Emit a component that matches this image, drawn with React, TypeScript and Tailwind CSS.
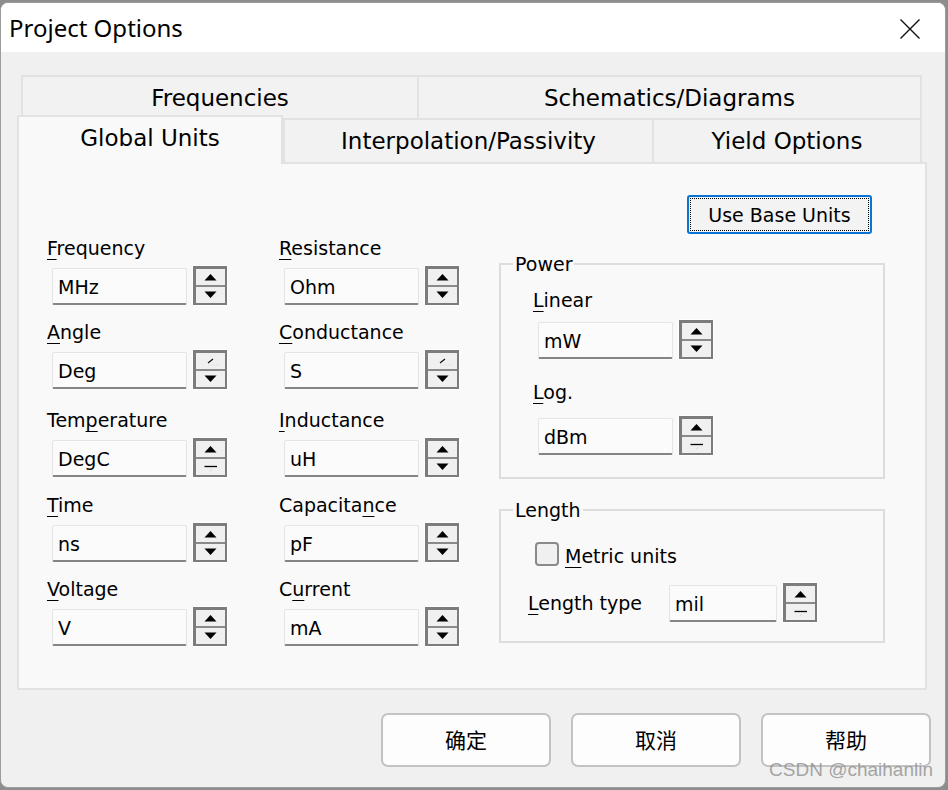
import React from "react";

type SpinKind = "normal" | "angle" | "minus";

function Spinner({ kind = "normal" }: { kind?: SpinKind }) {
	return (
		<div className="flex h-[39px] w-[34px] flex-col border-[2px] border-l-[3px] border-t-[3px] border-[#7c7c7c] bg-[#f0f0f0] outline outline-1 outline-white">
			<div className="flex-1">
				<svg width="29" height="16" viewBox="0 0 29 16">
					{kind === "angle" ? (
						<>
							<line x1="12" y1="10" x2="17" y2="6" stroke="#111" strokeWidth="1.3" />
							<line x1="12" y1="12" x2="24" y2="12" stroke="#e6e6e6" strokeWidth="1" />
						</>
					) : (
						<polygon points="8.5,11.5 20.5,11.5 14.5,5" fill="#000" />
					)}
				</svg>
			</div>
			<div className="h-[2px] bg-[#8a8a8a]" />
			<div className="flex-1">
				<svg width="29" height="16" viewBox="0 0 29 16">
					{kind === "minus" ? (
						<>
							<line x1="8.5" y1="7.5" x2="21" y2="7.5" stroke="#000" strokeWidth="1.3" />
							<line x1="14" y1="12" x2="16" y2="10" stroke="#d6d6d6" strokeWidth="1" />
						</>
					) : (
						<polygon points="8.5,4.5 20.5,4.5 14.5,11" fill="#000" />
					)}
				</svg>
			</div>
		</div>
	);
}

function Input({ value, w = "w-[135px]" }: { value: string; w?: string }) {
	return (
		<div
			className={`${w} flex h-[37px] items-center rounded-[2px] border border-b-[2px] border-[#e4e4e4] border-b-[#858585] bg-[#fbfbfb] pl-[5px] pt-[3px] text-[19px] text-black`}
		>
			{value}
		</div>
	);
}

function Label({ text, u }: { text: string; u: number }) {
	return (
		<div className="h-[22px] text-[19px] leading-[22px] whitespace-nowrap text-black">
			{text.slice(0, u)}
			<span className="underline decoration-1 underline-offset-[4px]">{text[u]}</span>
			{text.slice(u + 1)}
		</div>
	);
}

function Field({
	label,
	u,
	value,
	kind,
	className = "",
}: {
	label: string;
	u: number;
	value: string;
	kind?: SpinKind;
	className?: string;
}) {
	return (
		<div className={className}>
			<Label text={label} u={u} />
			<div className="ml-[5px] mt-[7px] flex items-end gap-[6px]">
				<Input value={value} />
				<Spinner kind={kind} />
			</div>
		</div>
	);
}

function Tab({ label, w, active = false }: { label: string; w: string; active?: boolean }) {
	return (
		<div
			className={
				active
					? `${w} relative z-10 -mb-[2px] flex h-[49px] items-start justify-center border-[2px] border-b-0 border-[#e2e2e2] bg-[#f9f9f9] pt-[4px] text-[23px]`
					: `${w} flex h-[44px] items-center justify-center border-[2px] border-r-0 border-b-0 border-[#e2e2e2] bg-[#f2f2f2] text-[23px] last:border-r-[2px]`
			}
		>
			{label}
		</div>
	);
}

function CnButton({ label }: { label: string }) {
	return (
		<button className="flex h-[54px] w-[170px] items-center justify-center rounded-[7px] border-[2px] border-[#c3c3c3] bg-[#fdfdfd] font-['Noto_Sans_CJK_SC',sans-serif] text-[21px] text-black">
			{label}
		</button>
	);
}

export default function App() {
	return (
		<div className="h-[790px] w-[948px] overflow-hidden bg-[#8d8d8d] pt-[2px] font-['DejaVu_Sans',sans-serif] text-black">
			<div className="relative flex h-[786px] w-[946px] flex-col overflow-hidden rounded-[8px] border border-[#9c9c9c] bg-[#f0f0f0]">
				{/* title bar */}
				<div className="flex h-[49px] items-center justify-between bg-white pl-[8px] pr-[24px]">
					<span className="pt-[1px] font-['Noto_Sans',sans-serif] text-[24px] text-black">Project Options</span>
					<svg width="22" height="22" viewBox="0 0 22 22" className="mt-[2px]">
						<path d="M1.5 1.5 L20.5 20.5 M20.5 1.5 L1.5 20.5" stroke="#111" strokeWidth="1.4" fill="none" />
					</svg>
				</div>

				<div className="flex flex-col pl-[16px] pt-[23px]">
					{/* tab strip */}
					<div className="ml-[4px] flex">
						<Tab label="Frequencies" w="w-[396px]" />
						<Tab label="Schematics/Diagrams" w="w-[505px]" />
					</div>
					<div className="-mt-[4px] flex h-[47px] items-end">
						<Tab label="Global Units" w="w-[266px]" active />
						<Tab label="Interpolation/Passivity" w="w-[369px]" />
						<Tab label="Yield Options" w="w-[270px]" />
					</div>

					{/* panel */}
					<div className="flex h-[528px] w-[910px] border-[2px] border-[#e2e2e2] bg-[#f9f9f9] pl-[28px]">
						<div className="mt-[73px] w-[232px]">
							<Field label="Frequency" u={0} value="MHz" />
							<Field label="Angle" u={0} value="Deg" kind="angle" className="mt-[16px]" />
							<Field label="Temperature" u={3} value="DegC" kind="minus" className="mt-[20px]" />
							<Field label="Time" u={0} value="ns" className="mt-[17px]" />
							<Field label="Voltage" u={0} value="V" className="mt-[16px]" />
						</div>
						<div className="mt-[73px] w-[220px]">
							<Field label="Resistance" u={0} value="Ohm" />
							<Field label="Conductance" u={0} value="S" kind="angle" className="mt-[16px]" />
							<Field label="Inductance" u={0} value="uH" className="mt-[20px]" />
							<Field label="Capacitance" u={8} value="pF" className="mt-[17px]" />
							<Field label="Current" u={1} value="mA" className="mt-[16px]" />
						</div>

						<div className="mt-[31px] flex w-[386px] flex-col">
							<div className="flex justify-end pr-[13px]">
								<button className="h-[39px] w-[185px] rounded-[3px] border-[2px] border-[#0a74d6] bg-[#f3f3f3] p-[1px]">
									<div className="flex h-full w-full items-center justify-center border border-dotted border-black pt-[2px] text-[19px]">
										Use Base Units
									</div>
								</button>
							</div>

							<fieldset className="mt-[19px] border-[2px] border-[#dddddd]">
								<legend className="ml-[12px] px-[2px] text-[19px] leading-[22px]">Power</legend>
								<div className="pb-[22px] pl-[32px]">
									<div className="mt-[14px]">
										<Label text="Linear" u={0} />
										<div className="ml-[5px] mt-[9px] flex items-end gap-[6px]">
											<Input value="mW" />
											<Spinner />
										</div>
									</div>
									<div className="mt-[22px]">
										<Label text="Log." u={0} />
										<div className="ml-[5px] mt-[13px] flex items-end gap-[6px]">
											<Input value="dBm" />
											<Spinner kind="minus" />
										</div>
									</div>
								</div>
							</fieldset>

							<fieldset className="mt-[20px] border-[2px] border-[#dddddd]">
								<legend className="ml-[12px] px-[2px] text-[19px] leading-[22px]">Length</legend>
								<div className="pb-[19px] pl-[27px]">
									<div className="ml-[7px] mt-[21px] flex h-[24px] items-center gap-[6px]">
										<div className="h-[24px] w-[24px] rounded-[4px] border-[2px] border-[#8a8a8a] bg-[#f0f0f0]" />
										<div className="pt-[3px]">
											<Label text="Metric units" u={0} />
										</div>
									</div>
									<div className="mt-[17px] flex items-center">
										<div className="w-[141px]">
											<Label text="Length type" u={0} />
										</div>
										<div className="flex items-end gap-[6px]">
											<Input value="mil" w="w-[108px]" />
											<Spinner kind="minus" />
										</div>
									</div>
								</div>
							</fieldset>
						</div>
					</div>

					{/* buttons */}
					<div className="mt-[23px] flex justify-end gap-[20px] pr-[14px]">
						<CnButton label="确定" />
						<CnButton label="取消" />
						<CnButton label="帮助" />
					</div>
				</div>

				<span className="absolute bottom-[3px] right-[12px] font-['Liberation_Sans',sans-serif] text-[19px] text-[#8f8f8f]/80">
					CSDN @chaihanlin
				</span>
			</div>
		</div>
	);
}
